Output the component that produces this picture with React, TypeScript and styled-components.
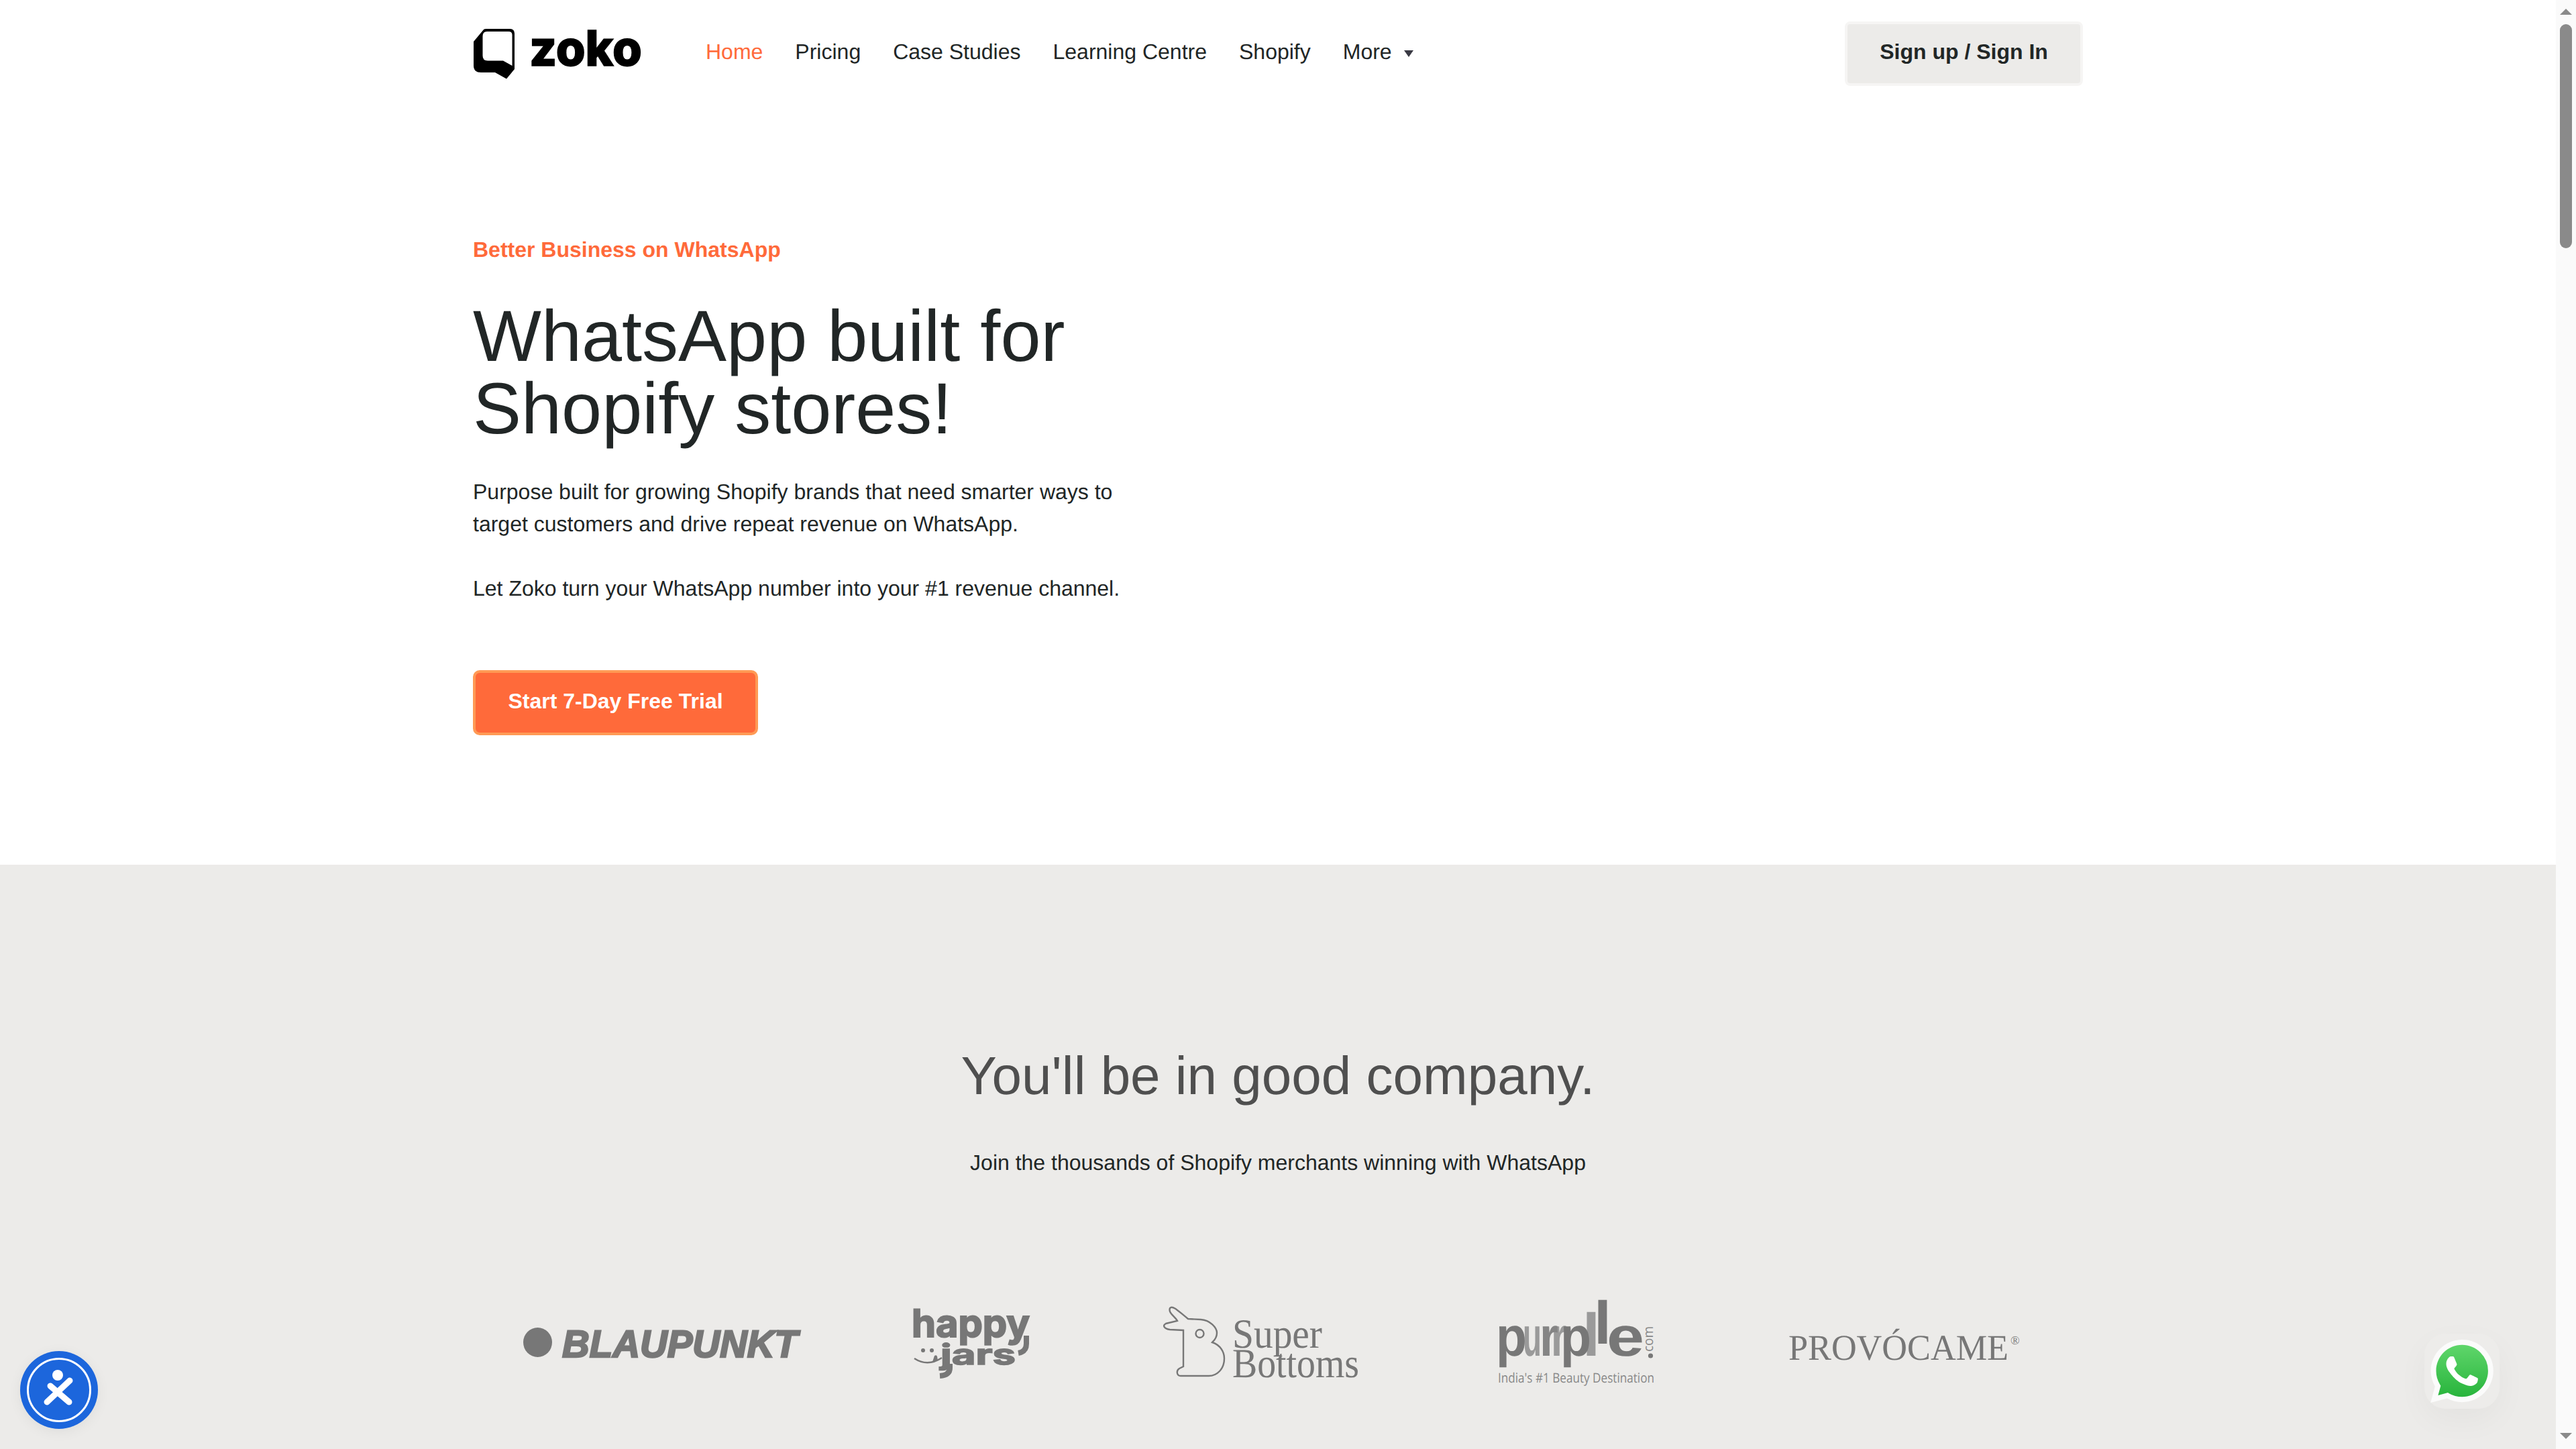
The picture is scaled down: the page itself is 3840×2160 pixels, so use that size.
import { styled, createGlobalStyle } from "styled-components";

const GlobalStyle = createGlobalStyle`
  html, body {
    margin: 0;
    padding: 0;
    background: #fff;
  }
  body {
    font-family: "Liberation Sans", Arial, sans-serif;
    color: #212626;
    text-rendering: geometricPrecision;
  }
  svg {
    overflow: visible;
  }
`;

const ORANGE = "#ff6a3a";
const LOGO_GREY = "#777";

const Viewport = styled.div`
  display: flex;
  width: 3840px;
  height: 2160px;
  overflow: hidden;
`;
const Page = styled.div`
  flex: 1;
  min-width: 0;
`;
const Container = styled.div`
  width: 2400px;
  margin: 0 auto;
`;

const Header = styled(Container)`
  display: flex;
  align-items: center;
  height: 160px;
`;
const LogoSvg = styled.svg`
  width: 252px;
  height: 80px;
  flex: none;
`;
const Nav = styled.nav`
  display: flex;
  align-items: center;
  gap: 48px;
  margin: 0 0 6px 95px;
`;
const NavLink = styled.a<{ $active?: boolean }>`
  font-size: 32px;
  line-height: 48px;
  color: ${({ $active }) => ($active ? ORANGE : "#212626")};
  text-decoration: none;
  display: flex;
  align-items: center;
`;
const Caret = styled.span`
  width: 0;
  height: 0;
  margin-left: 18px;
  margin-top: 5px;
  border-left: 7px solid transparent;
  border-right: 7px solid transparent;
  border-top: 10px solid #3a3a44;
`;
const SignButton = styled.button`
  margin-left: auto;
  width: 355px;
  height: 96px;
  background: #ecebe9;
  border: 4px solid #f6f5f4;
  border-radius: 8px;
  font-family: inherit;
  font-size: 32px;
  font-weight: 700;
  color: #212626;
  padding: 0 0 6px;
`;

const Hero = styled(Container)`
  padding: 188px 0 193px;
`;
const Eyebrow = styled.div`
  font-size: 32px;
  line-height: 48px;
  font-weight: 700;
  color: ${ORANGE};
`;
const Title = styled.h1`
  margin: 51px 0 46px;
  font-size: 108px;
  line-height: 108px;
  font-weight: 400;
  color: #212626;
`;
const Copy = styled.p`
  margin: 0 0 48px;
  max-width: 1000px;
  font-size: 32px;
  line-height: 48px;
  color: #212626;
`;
const TrialButton = styled.button`
  display: block;
  margin-top: 98px;
  width: 425px;
  height: 97px;
  background: ${ORANGE};
  border: 4px solid #ff9a55;
  border-radius: 10px;
  font-family: inherit;
  font-size: 32px;
  font-weight: 700;
  color: #fff;
  padding: 0 0 5px;
`;

const Company = styled.section`
  background: #ecebe9;
  padding-top: 267px;
  height: 900px;
  box-sizing: border-box;
`;
const CompanyTitle = styled.h2`
  margin: 0;
  text-align: center;
  font-size: 80px;
  line-height: 96px;
  font-weight: 400;
  color: #4f4f4f;
`;
const CompanySub = styled.p`
  margin: 57px 0 0;
  text-align: center;
  font-size: 32px;
  line-height: 48px;
  color: #212626;
`;
const LogoRow = styled(Container)`
  display: grid;
  grid-template-columns: 569px 375px 495px 440px 1fr;
  padding-left: 75px;
  box-sizing: border-box;
  margin-top: 174px;
`;
const BrandSvg = styled.svg<{ $w: number }>`
  display: block;
  width: ${({ $w }) => $w}px;
  height: 140px;
`;

const ScrollRail = styled.div`
  width: 30px;
  flex: none;
  background: #fafafa;
  display: flex;
  flex-direction: column;
  align-items: center;
  padding: 13px 0 15px;
  box-sizing: border-box;
`;
const ArrowUp = styled.span`
  width: 0;
  height: 0;
  border-left: 9px solid transparent;
  border-right: 9px solid transparent;
  border-bottom: 9px solid #8a8a8a;
`;
const ArrowDown = styled.span`
  width: 0;
  height: 0;
  margin-top: auto;
  border-left: 9px solid transparent;
  border-right: 9px solid transparent;
  border-top: 9px solid #8a8a8a;
`;
const Thumb = styled.span`
  width: 18px;
  height: 334px;
  margin-top: 14px;
  border-radius: 9px;
  background: #8a8a8a;
`;

const AccessButton = styled.div`
  position: fixed;
  left: 30px;
  bottom: 30px;
  width: 116px;
  height: 116px;
  border-radius: 50%;
  background: #1c66dc;
  box-shadow: 0 4px 20px rgba(0, 0, 0, 0.06);
  display: flex;
  align-items: center;
  justify-content: center;
`;
const AccessRing = styled.div`
  width: 96px;
  height: 96px;
  box-sizing: border-box;
  border: 3px solid #fff;
  border-radius: 50%;
  display: flex;
  align-items: center;
  justify-content: center;
`;
const WhatsAppWidget = styled.div`
  position: fixed;
  right: 114px;
  bottom: 60px;
  width: 112px;
  height: 112px;
  border-radius: 32px;
  background: #edecea;
  box-shadow: 0 16px 48px rgba(0, 0, 0, 0.04);
  display: flex;
  align-items: center;
  justify-content: center;
`;

function ZokoLogo() {
  return (
    <LogoSvg viewBox="5 10 252 80">
      <path d="M6 32 L21 14 Q22 13 25 13 L60 13 Q67 13 67 20 L67 73 L55 87.5 L38 78 L17 78 Q6 78 6 68 Z" fill="#000" />
      <path d="M19.5 24 Q19.5 17 26 17 L58 17 Q63.5 17 63.5 22 L63.5 68 L50 60.5 L27 60.5 Q19.5 60.5 19.5 53 Z" fill="#fff" />
      <text x="89" y="68" fontFamily="Inter" fontWeight="800" fontSize="73" textLength="168" lengthAdjust="spacingAndGlyphs" fill="#000" stroke="#000" strokeWidth="1.5">
        zoko
      </text>
    </LogoSvg>
  );
}

function Blaupunkt() {
  return (
    <BrandSvg $w={420} viewBox="0 0 420 140">
      <ellipse cx="21.5" cy="70" rx="21.5" ry="22" fill={LOGO_GREY} />
      <text x="58" y="92" fontFamily="Liberation Sans" fontWeight="700" fontStyle="italic" fontSize="57" textLength="351" lengthAdjust="spacingAndGlyphs" fill={LOGO_GREY} stroke={LOGO_GREY} strokeWidth="2.5">
        BLAUPUNKT
      </text>
    </BrandSvg>
  );
}

function HappyJars() {
  return (
    <BrandSvg $w={200} viewBox="0 -10 200 140">
      <text x="10" y="52" fontFamily="Inter" fontWeight="700" fontSize="57" textLength="176" lengthAdjust="spacingAndGlyphs" fill={LOGO_GREY} stroke={LOGO_GREY} strokeWidth="2">
        happy
      </text>
      <path d="M181 50 L181 62 Q181 74 169 76" fill="none" stroke={LOGO_GREY} strokeWidth="8" />
      <text x="53" y="93" fontFamily="Inter" fontWeight="700" fontSize="42" textLength="112" lengthAdjust="spacingAndGlyphs" fill={LOGO_GREY} stroke={LOGO_GREY} strokeWidth="1.5">
        jars
      </text>
      <path d="M67 92 L67 98 Q67 109 52 110" fill="none" stroke={LOGO_GREY} strokeWidth="8" />
      <circle cx="27" cy="72" r="3" fill={LOGO_GREY} />
      <circle cx="40" cy="72" r="3" fill={LOGO_GREY} />
      <path d="M14 84 Q34 97 55 83" fill="none" stroke={LOGO_GREY} strokeWidth="2.5" />
      <path d="M41 89 L44 80 Q47 78 48 81 L49 87 Z" fill={LOGO_GREY} />
    </BrandSvg>
  );
}

function SuperBottoms() {
  return (
    <BrandSvg $w={310} viewBox="0 -10 310 140">
      <path
        d="M20 9 C23 5 28 9 47 25 L66 26 C80 27 90 38 90 46 C90 54 85 58 83 60 C95 64 101 74 101 84 C101 100 90 110 78 110 L36 110 C30 110 29 102 34 99 L40 96 L40 42 L20 41 C12 40 8 35 14 32 L31 28 C28 22 17 16 20 9 Z"
        fill="none"
        stroke={LOGO_GREY}
        strokeWidth="2.4"
      />
      <circle cx="64.5" cy="47" r="6" fill="none" stroke={LOGO_GREY} strokeWidth="2.4" />
      <text x="113" y="68" fontFamily="Liberation Serif" fontSize="62" textLength="134" lengthAdjust="spacingAndGlyphs" fill={LOGO_GREY}>
        Super
      </text>
      <text x="113" y="112" fontFamily="Liberation Serif" fontSize="62" textLength="189" lengthAdjust="spacingAndGlyphs" fill={LOGO_GREY}>
        Bottoms
      </text>
    </BrandSvg>
  );
}

function Purplle() {
  const letter = { fontFamily: "Liberation Sans", fontWeight: 700 };
  return (
    <BrandSvg $w={260} viewBox="0 0 260 140">
      <text {...letter} x="51" y="90" fontSize="83" textLength="28" lengthAdjust="spacingAndGlyphs" fill="#9a9a9a">u</text>
      <text {...letter} x="93" y="90" fontSize="83" textLength="24" lengthAdjust="spacingAndGlyphs" fill="#9a9a9a">r</text>
      <text {...letter} x="140" y="90" fontSize="90" textLength="26" lengthAdjust="spacingAndGlyphs" fill="#9a9a9a">l</text>
      <text {...letter} x="11" y="90" fontSize="83" textLength="46" lengthAdjust="spacingAndGlyphs" fill={LOGO_GREY}>p</text>
      <text {...letter} x="76" y="90" fontSize="83" textLength="28" lengthAdjust="spacingAndGlyphs" fill="#858585">r</text>
      <text {...letter} x="107" y="90" fontSize="83" textLength="46" lengthAdjust="spacingAndGlyphs" fill={LOGO_GREY}>p</text>
      <text {...letter} x="157" y="72" fontSize="90" textLength="26" lengthAdjust="spacingAndGlyphs" fill={LOGO_GREY}>l</text>
      <text {...letter} x="176" y="90" fontSize="83" textLength="56" lengthAdjust="spacingAndGlyphs" fill={LOGO_GREY}>e</text>
      <text x="245" y="84" transform="rotate(-90 245 84)" fontFamily="Open Sans" fontSize="20" textLength="38" lengthAdjust="spacingAndGlyphs" fill="#888">com</text>
      <circle cx="241.5" cy="90" r="3.6" fill={LOGO_GREY} />
      <text x="14" y="130" fontFamily="Open Sans" fontSize="20" textLength="233" lengthAdjust="spacingAndGlyphs" fill="#888">
        India's #1 Beauty Destination
      </text>
    </BrandSvg>
  );
}

function Provocame() {
  return (
    <BrandSvg $w={360} viewBox="0 0 360 140">
      <text x="7" y="96" fontFamily="Liberation Serif" fontSize="54" textLength="328" lengthAdjust="spacingAndGlyphs" fill={LOGO_GREY}>
        PROVÓCAME
      </text>
      <text x="338" y="73" fontFamily="Liberation Serif" fontSize="18" fill={LOGO_GREY}>
        ®
      </text>
    </BrandSvg>
  );
}

function AccessIcon() {
  return (
    <svg width="60" height="60" viewBox="0 0 60 60">
      <circle cx="28" cy="8" r="8" fill="#fff" />
      <path d="M12 48 L46 16" stroke="#fff" strokeWidth="9" strokeLinecap="round" />
      <path d="M17 24 L45 48" stroke="#fff" strokeWidth="9" strokeLinecap="round" />
    </svg>
  );
}

function WhatsAppIcon() {
  return (
    <svg width="94" height="94" viewBox="0 0 24 24">
      <defs>
        <linearGradient id="waGreen" x1="0" y1="0" x2="0" y2="1">
          <stop offset="0" stopColor="#5fd66b" />
          <stop offset="1" stopColor="#28b43c" />
        </linearGradient>
      </defs>
      <path
        d="M20.463 3.488A11.815 11.815 0 0012.05 0C5.495 0 .16 5.335.157 11.892c0 2.096.547 4.142 1.588 5.945L.057 24l6.305-1.654a11.882 11.882 0 005.683 1.448h.005c6.554 0 11.89-5.335 11.893-11.893a11.821 11.821 0 00-3.48-8.413z"
        fill="#fbfbfb"
      />
      <path
        d="M12.051 21.785h-.004a9.87 9.87 0 01-5.031-1.378l-.361-.214-3.741.982.998-3.648-.235-.374a9.86 9.86 0 01-1.51-5.26c.001-5.45 4.436-9.884 9.888-9.884 2.64 0 5.122 1.03 6.988 2.898a9.825 9.825 0 012.893 6.994c-.003 5.45-4.437 9.884-9.885 9.884"
        fill="url(#waGreen)"
      />
      <path
        d="M17.472 14.382c-.297-.149-1.758-.867-2.03-.967-.273-.099-.471-.148-.67.15-.197.297-.767.966-.94 1.164-.173.199-.347.223-.644.075-.297-.15-1.255-.463-2.39-1.475-.883-.788-1.48-1.761-1.653-2.059-.173-.297-.018-.458.13-.606.134-.133.298-.347.446-.52.149-.174.198-.298.298-.497.099-.198.05-.371-.025-.52-.075-.149-.669-1.612-.916-2.207-.242-.579-.487-.5-.669-.51-.173-.008-.371-.01-.57-.01-.198 0-.52.074-.792.372-.272.297-1.04 1.016-1.04 2.479 0 1.462 1.065 2.875 1.213 3.074.149.198 2.096 3.2 5.077 4.487.709.306 1.262.489 1.694.625.712.227 1.36.195 1.871.118.571-.085 1.758-.719 2.006-1.413.248-.694.248-1.289.173-1.413-.074-.124-.272-.198-.57-.347"
        fill="#fff"
      />
    </svg>
  );
}

const links = ["Pricing", "Case Studies", "Learning Centre", "Shopify"];

export default function App() {
  return (
    <Viewport>
      <GlobalStyle />
      <Page>
        <Header>
          <ZokoLogo />
          <Nav>
            <NavLink $active>Home</NavLink>
            {links.map((label) => (
              <NavLink key={label}>{label}</NavLink>
            ))}
            <NavLink>
              More
              <Caret />
            </NavLink>
          </Nav>
          <SignButton>Sign up / Sign In</SignButton>
        </Header>
        <Hero>
          <Eyebrow>Better Business on WhatsApp</Eyebrow>
          <Title>
            WhatsApp built for
            <br />
            Shopify stores!
          </Title>
          <Copy>Purpose built for growing Shopify brands that need smarter ways to target customers and drive repeat revenue on WhatsApp.</Copy>
          <Copy>Let Zoko turn your WhatsApp number into your #1 revenue channel.</Copy>
          <TrialButton>Start 7-Day Free Trial</TrialButton>
        </Hero>
        <Company>
          <CompanyTitle>You'll be in good company.</CompanyTitle>
          <CompanySub>Join the thousands of Shopify merchants winning with WhatsApp</CompanySub>
          <LogoRow>
            <Blaupunkt />
            <HappyJars />
            <SuperBottoms />
            <Purplle />
            <Provocame />
          </LogoRow>
        </Company>
      </Page>
      <ScrollRail>
        <ArrowUp />
        <Thumb />
        <ArrowDown />
      </ScrollRail>
      <AccessButton>
        <AccessRing>
          <AccessIcon />
        </AccessRing>
      </AccessButton>
      <WhatsAppWidget>
        <WhatsAppIcon />
      </WhatsAppWidget>
    </Viewport>
  );
}
